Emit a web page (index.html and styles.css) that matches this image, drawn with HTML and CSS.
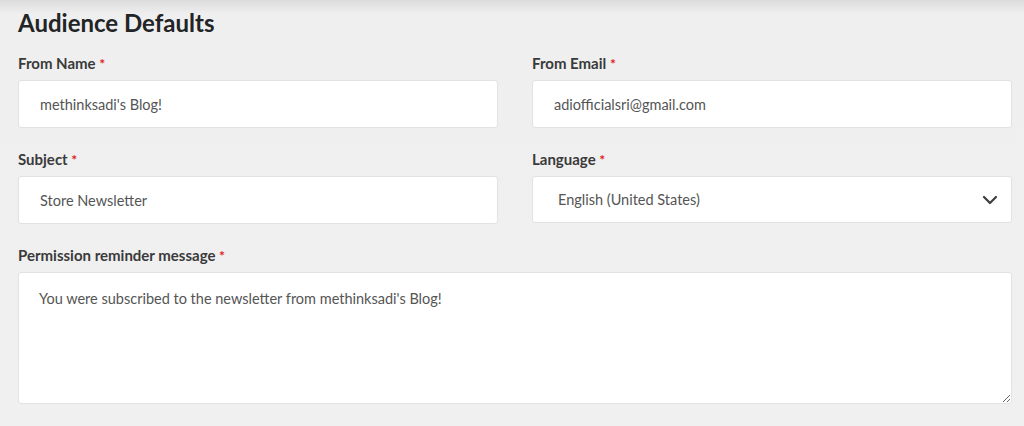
FILE: index.html
```html
<!DOCTYPE html>
<html lang="en">
<head>
  <meta charset="UTF-8">
  <title>Audience Defaults</title>
  <link rel="stylesheet" href="styles.css">
</head>
<body>
  <h1 class="section-title">Audience Defaults</h1>
  <form class="defaults-form">
    <div class="field">
      <label class="field-label" for="from-name">From Name <span class="req">*</span></label>
      <input class="field-input" id="from-name" type="text" value="methinksadi's Blog!">
    </div>
    <div class="field">
      <label class="field-label" for="from-email">From Email <span class="req">*</span></label>
      <input class="field-input" id="from-email" type="text" value="adiofficialsri@gmail.com">
    </div>
    <div class="field">
      <label class="field-label" for="subject">Subject <span class="req">*</span></label>
      <input class="field-input" id="subject" type="text" value="Store Newsletter">
    </div>
    <div class="field">
      <label class="field-label" for="language">Language <span class="req">*</span></label>
      <div class="select-wrap">
        <select class="field-input field-select" id="language">
          <option>English (United States)</option>
        </select>
        <svg class="chevron" width="16" height="10" viewBox="0 0 16 10">
          <path d="M2 2 L8 8 L14 2" fill="none" stroke="#3d3d3d" stroke-width="2.2" stroke-linecap="round" stroke-linejoin="round"/>
        </svg>
      </div>
    </div>
    <div class="field field-wide">
      <label class="field-label" for="reminder">Permission reminder message <span class="req">*</span></label>
      <textarea class="field-input field-area" id="reminder">You were subscribed to the newsletter from methinksadi's Blog!</textarea>
    </div>
  </form>
</body>
</html>
```

FILE: styles.css
```css
* {
  box-sizing: border-box;
}

body {
  margin: 0;
  padding: 7px 12px 0 18px;
  min-height: 100vh;
  font-family: Lato, "Open Sans", sans-serif;
  background: linear-gradient(#dcdcdd, #efefef 14px, #f0f0f0);
}

.section-title {
  margin: 0 0 15px;
  font-size: 24px;
  line-height: 32px;
  font-weight: 700;
  color: #222426;
}

.defaults-form {
  display: grid;
  grid-template-columns: 1fr 1fr;
  column-gap: 34px;
  row-gap: 22px;
}

.field-wide {
  grid-column: 1 / -1;
}

.field-label {
  display: block;
  margin-bottom: 7px;
  font-size: 15px;
  line-height: 18px;
  font-weight: 700;
  color: #3a3a3a;
}

.req {
  color: #e01e1e;
  font-size: 14px;
}

.field-input {
  display: block;
  width: 100%;
  height: 48px;
  padding: 0 21px;
  border: 1px solid #e2e2e0;
  border-radius: 3px;
  background: #fff;
  font-family: inherit;
  font-size: 14.5px;
  color: #555;
  outline: none;
}

.select-wrap {
  position: relative;
}

.field-select {
  height: 47px;
  padding-left: 25px;
  -webkit-appearance: none;
  appearance: none;
}

.chevron {
  position: absolute;
  right: 14px;
  top: 19px;
  pointer-events: none;
}

.field-area {
  height: 132px;
  padding: 16px 20px;
  resize: vertical;
  line-height: 20px;
}
```
